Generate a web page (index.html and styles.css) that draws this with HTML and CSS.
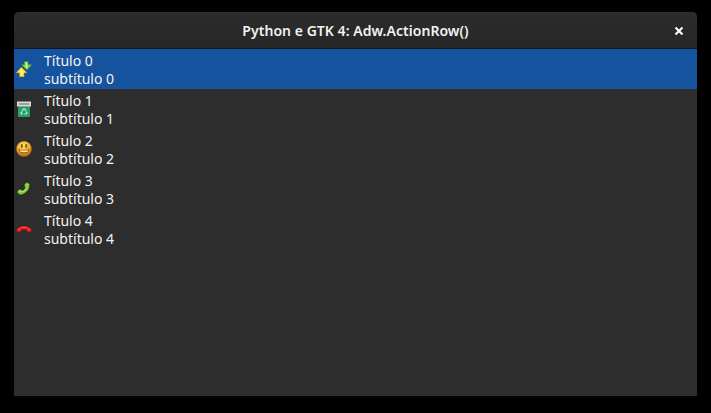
FILE: index.html
```html
<!DOCTYPE html>
<html lang="pt-BR">
<head>
<meta charset="utf-8">
<title>Python e GTK 4: Adw.ActionRow()</title>
<link rel="stylesheet" href="styles.css">
</head>
<body>
<main class="window">
  <header class="headerbar">
    <h1 class="title">Python e GTK 4: Adw.ActionRow()</h1>
    <button class="close" aria-label="Fechar"><svg width="10" height="10" viewBox="0 0 10 10"><path d="M1.5 1.5 8.5 8.5M8.5 1.5 1.5 8.5" stroke="#fff" stroke-width="2.1"/></svg></button>
  </header>
  <ul class="list">
    <li class="row selected">
      <svg class="icon" viewBox="0 0 16 16"><path d="M8.3.4h3.8v3.2h3.6L10.9 8.9 5.5 3.8h2.8z" fill="#8fdf4e" stroke="#348b35" stroke-width=".6"/><path d="M5.4 6.2 10.8 11.8H8v3.9H3.6v-3.9H.2z" fill="#ffe443" stroke="#d1a51a" stroke-width=".6"/><path d="M5.6 8.2v6.3M2.7 11h5.8M10.5 1.5v5.7" stroke="#fff6a0" stroke-width=".8"/></svg>
      <div class="text"><span>Título 0</span><span>subtítulo 0</span></div>
    </li>
    <li class="row">
      <svg class="icon" viewBox="0 0 16 16"><path d="M2 5.5h12V15a1 1 0 0 1-1 1H3a1 1 0 0 1-1-1z" fill="#26a269"/><path d="M1 .6h14v5H1z" fill="#deddda"/><path d="M2.6 2.2h10.8v1.6H2.6z" fill="#8b8a8d"/><path d="m6.2 10 1.3-2h1.2L10 10M10.7 10.5 11 12 9.8 13H8.5M7 13H5.6L5 11.7l.8-1.2" fill="none" stroke="#c5f5dc" stroke-width="1.2"/></svg>
      <div class="text"><span>Título 1</span><span>subtítulo 1</span></div>
    </li>
    <li class="row">
      <svg class="icon" viewBox="0 0 16 16"><defs><radialGradient id="face" cx=".45" cy=".28" r=".75"><stop offset="0" stop-color="#ffe45c"/><stop offset=".55" stop-color="#eba928"/><stop offset="1" stop-color="#aa5910"/></radialGradient></defs><circle cx="8" cy="8" r="7.7" fill="url(#face)"/><ellipse cx="5.9" cy="5" rx=".8" ry="1.9" fill="#593617"/><ellipse cx="10.1" cy="5" rx=".8" ry="1.9" fill="#593617"/><path d="M2.5 8Q8 10 13.5 8 12.4 12.5 8 12.5T2.5 8" fill="#965011"/><path d="M3.6 8.9Q8 10.2 12.4 8.9L11.4 10.8Q8 11.8 4.6 10.8z" fill="#fff0a0"/></svg>
      <div class="text"><span>Título 2</span><span>subtítulo 2</span></div>
    </li>
    <li class="row">
      <svg class="icon" viewBox="0 0 16 16"><path d="m9 2.8 2.3-1.1 2 1.4c.6 5.5-3.6 10.2-9.2 10.6l-2.7-1.9.6-2.5 2.8-.7 1.6 1.2c1.4-.7 2.6-1.8 3.1-3.4L8.4 5.2z" fill="#80cd35" stroke="#3f7817" stroke-width=".5"/><path d="m10.2 3.3 1.3-.4 1 1M2.8 10.4l1.8-.6 1.6 1.1c2.2-.8 3.9-2.4 4.7-4.6" fill="none" stroke="#c9f17c" stroke-width="1"/></svg>
      <div class="text"><span>Título 3</span><span>subtítulo 3</span></div>
    </li>
    <li class="row">
      <svg class="icon" viewBox="0 0 16 16"><path d="M.4 9.9C.6 3.5 15.4 3.5 15.6 9.9l-1.5 1.2-3.4-.6-.4-1.6c-1.6-.5-3-.5-4.6 0l-.4 1.6-3.4.6z" fill="#de1c20" stroke="#8c1012" stroke-width=".5"/><path d="M2 9.4 4.6 7M11.4 7 14 9.4M6 6.4h4" fill="none" stroke="#ff6660" stroke-width="1"/></svg>
      <div class="text"><span>Título 4</span><span>subtítulo 4</span></div>
    </li>
  </ul>
</main>
</body>
</html>
```
FILE: styles.css
```css
* { box-sizing: border-box; }
body {
  margin: 0;
  height: 413px;
  padding: 12px 14px 17px;
  overflow: hidden;
  background: #000;
  color: #f2f2f2;
  font-family: "Noto Sans", sans-serif;
}
.window {
  height: 384px;
  overflow: hidden;
  border-radius: 5px 5px 0 0;
  background: #2d2d2d;
}
.headerbar {
  display: grid;
  grid-template-columns: 36px 1fr 36px;
  align-items: center;
  height: 37px;
  border-top: 1px solid #303030;
  border-bottom: 1px solid #0b1524;
  background: linear-gradient(#2c2c2c, #262626);
}
.title {
  grid-column: 2;
  margin: 0;
  text-align: center;
  font-size: 14px;
  line-height: 20px;
  font-weight: 600;
  letter-spacing: 0.04px;
}
.close {
  display: grid;
  place-items: center;
  width: 36px;
  height: 32px;
  padding: 0;
  border: 0;
  background: none;
}
.list { margin: 0; padding: 0; list-style: none; }
.row {
  display: flex;
  align-items: center;
  gap: 12px;
  height: 40px;
  padding-left: 2px;
}
.selected { background: #15539e; }
.icon { width: 16px; height: 16px; }
.text {
  display: flex;
  flex-direction: column;
  padding-top: 1px;
  font-size: 14px;
  line-height: 18px;
}
```
